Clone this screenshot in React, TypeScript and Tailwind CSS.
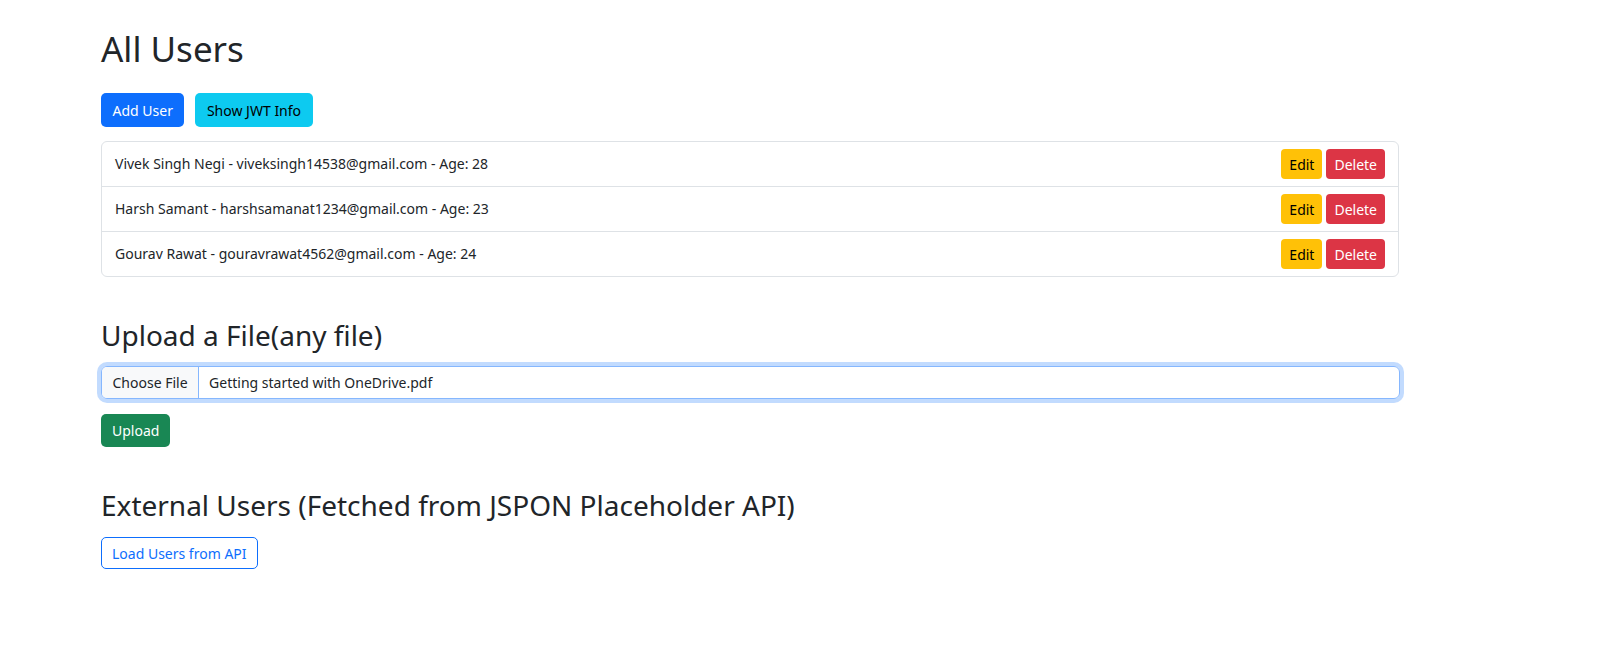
import React from 'react';

const users = [
  { id: 1, name: 'Vivek Singh Negi', email: 'viveksingh14538@gmail.com', age: 28 },
  { id: 2, name: 'Harsh Samant', email: 'harshsamanat1234@gmail.com', age: 23 },
  { id: 3, name: 'Gourav Rawat', email: 'gouravrawat4562@gmail.com', age: 24 },
];

export default function App() {
  return (
    <main className="min-h-screen bg-white text-[#212529] font-['Noto_Sans',sans-serif]">
      <div className="ml-[101px] w-[1298px] pt-[28px]">
        <h1 className="text-[35px] leading-[42px] font-normal">All Users</h1>

        <div className="flex gap-[11px] mt-[23px]">
          <button className="h-[34px] px-[11.5px] rounded-[5px] bg-[#0d6efd] text-white text-[14px]">Add User</button>
          <button className="h-[34px] px-[11.5px] rounded-[5px] bg-[#0dcaf0] text-black text-[14px]">Show JWT Info</button>
        </div>

        <ul className="mt-[14px] border border-[#dee2e6] rounded-[6px]">
          {users.map((u, i) => (
            <li
              key={u.id}
              className={`flex items-center justify-between pl-[13px] pr-[13px] py-[7px] text-[14px] ${i > 0 ? 'border-t border-[#dee2e6]' : ''}`}
            >
              <span className="-mt-[1px]">
                {u.name} - {u.email} - Age: {u.age}
              </span>
              <div className="flex gap-[4px]">
                <button className="h-[30px] px-[8px] rounded-[4px] bg-[#ffc107] text-black text-[14px]">Edit</button>
                <button className="h-[30px] px-[8px] rounded-[4px] bg-[#dc3545] text-white text-[14px]">Delete</button>
              </div>
            </li>
          ))}
        </ul>

        <h3 className="mt-[41px] text-[28px] leading-[34px] font-normal">Upload a File(any file)</h3>

        <div className="mt-[14px] w-[1299px] h-[33px] flex border border-[#86b7fe] rounded-[6px] shadow-[0_0_0_4px_rgba(13,110,253,0.25)] overflow-hidden text-[14px]">
          <div className="flex items-center px-[10.5px] bg-[#f8f9fa] border-r border-[#86b7fe]">Choose File</div>
          <div className="flex items-center pl-[10px]">Getting started with OneDrive.pdf</div>
        </div>

        <button className="mt-[15px] h-[33px] px-[11px] rounded-[5px] bg-[#198754] text-white text-[14px]">Upload</button>

        <h3 className="mt-[41px] text-[28px] leading-[34px] font-normal">External Users (Fetched from JSPON Placeholder API)</h3>

        <button className="mt-[15px] h-[32px] px-[10px] rounded-[5px] border border-[#0d6efd] text-[#0d6efd] text-[14px]">
          Load Users from API
        </button>
      </div>
    </main>
  );
}
